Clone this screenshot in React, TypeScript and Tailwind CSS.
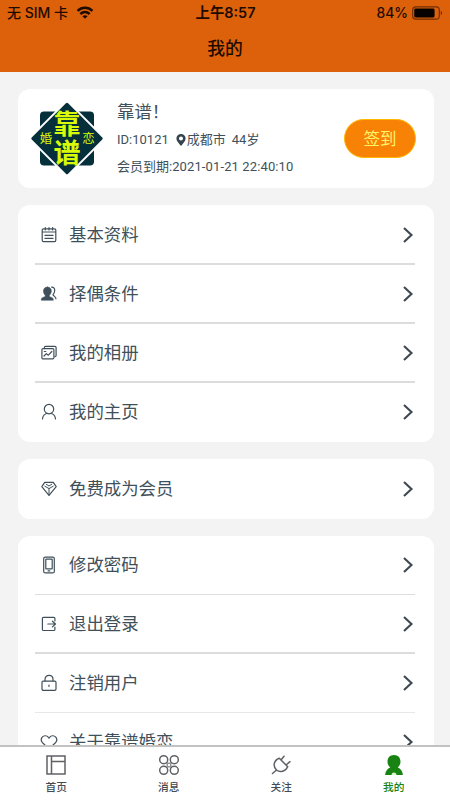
import React from "react";

type IconName =
  | "notes" | "match" | "album" | "person" | "gem" | "phone" | "exit" | "lock" | "heart";

const icons: Record<IconName, React.ReactNode> = {
  notes: (
    <>
      <rect x="1.2" y="1.8" width="13.600" height="12.800" rx="1.3" />
      <path d="M1.5 5h13M4.3 .6v2.4M8 .6v2.4M11.6 .6v2.4M4 8.400h8M4 11.400h8" />
    </>
  ),
  match: (
    <>
      <path
        fill="currentColor"
        strokeWidth=".5"
        d="M6.4 1C3.9 1 2.4 2.700 2.4 5c0 1.900.9 3.300 1.800 4.200v1.200L1 11.900c-.5.3-.7 1-.7 2.400h12c0-1.500-.2-2.100-.8-2.400l-3.100-1.500V9.200C9.400 8.300 10.400 6.900 10.400 5c0-2.300-1.500-4-4-4z"
      />
      <path d="M10.600 1.100c2.300.1 3.200 1.600 3.100 3.600-.1 1.800-.8 3-1.800 4.200l2.100 2c.6.500.8 1 .9 1.900" />
    </>
  ),
  album: (
    <>
      <path d="M3.400 3.600V2.400c0-.7.4-1.100 1.100-1.100h9.400c.7 0 1.200.4 1.200 1.100v8.100c0 .7-.4 1.100-1.200 1.100" />
      <rect x=".9" y="3.700" width="12" height="10.200" rx="1.200" />
      <path d="m3 11 2.300-2.300 2.100 1.500 3.400-3.700M3.300 6.500h1.500" />
    </>
  ),
  person: (
    <>
      <circle cx="8" cy="5.100" r="4.700" />
      <path d="M1.500 15c.2-3 1.600-4.700 4-5.500M10.500 9.500c2.400.8 3.800 2.500 4 5.500" />
    </>
  ),
  gem: (
    <>
      <path d="M3.700 1.300h8.600L15.200 5.600 8 14.300.8 5.600z" />
      <path d="M3.800 5.200 8 7.600l4.200-2.400M5.200 3.200 8 5l2.800-1.800M8 7.600V14" strokeWidth="1" />
    </>
  ),
  phone: (
    <>
      <rect x="2.700" y=".1" width="10.600" height="15.800" rx="1.500" />
      <rect x="4.800" y="2.200" width="6.400" height="9.700" rx=".4" />
      <path d="M7.200 13.900h1.500" strokeWidth="1.300" />
    </>
  ),
  exit: (
    <>
      <path d="M13.900 4.900V2.400c0-.7-.4-1.100-1.100-1.100H2.500c-.7 0-1.100.4-1.100 1.100v11c0 .7.400 1.100 1.100 1.100h10.300c.7 0 1.100-.4 1.100-1.100V11" />
      <path d="M6.800 8h7.700M11.400 5.200 14.500 8l-3.100 2.900" />
    </>
  ),
  lock: (
    <>
      <rect x="1" y="6.200" width="14" height="9.200" rx="1.300" />
      <path d="M4 6V4.400C4 2 5.700.4 8 .4s4 1.600 4 4V6M8 10.100v1.300" />
    </>
  ),
  heart: (
    <path d="M8 14.800 1.500 8.700C.1 7.200-.1 4.900 1.200 3.200c1.600-2 4.700-1.900 6.200.2l.6.8.6-.8c1.500-2.100 4.600-2.200 6.200-.2 1.300 1.700 1.100 4-.3 5.500z" />
  ),
};

function RowIcon({ name }: { name: IconName }) {
  return (
    <svg viewBox="0 0 16 16" className="h-4 w-4 shrink-0 overflow-visible" fill="none" stroke="currentColor" strokeWidth="1.200" strokeLinecap="round" strokeLinejoin="round">
      {icons[name]}
    </svg>
  );
}

function Row({ icon, label, divider = "" }: { icon: IconName; label: string; divider?: string }) {
  return (
    <div className={`flex shrink-0 items-center pl-[6px] pr-px ${divider || "h-[58px]"}`}>
      <RowIcon name={icon} />
      <span className="ml-3 flex-1 text-[17.4px] leading-6">{label}</span>
      <svg viewBox="0 0 12 18" className="h-[18px] w-3" fill="none" stroke="#3d4852" strokeWidth="2.1">
        <path d="m2 2 7.500 7L2 16" />
      </svg>
    </div>
  );
}

function Logo() {
  return (
    <svg viewBox="0 0 74 74" className="h-[74px] w-[74px] shrink-0" fontFamily="'Noto Sans CJK SC', sans-serif" textAnchor="middle">
      <rect x="10" y="9.500" width="54" height="54" rx="4" fill="#062f3c" />
      <path d="M37-2.500 76 36.500 37 75.500-2 36.500z" fill="#fff" />
      <path d="M37 2.300 71.200 36.500 37 70.700 2.800 36.500z" fill="#062f3c" stroke="#062f3c" strokeWidth="3" strokeLinejoin="round" />
      <g fill="#d9fa08">
        <text x="37" y="31.700" fontSize="27" fontWeight="700">靠</text>
        <text x="37" y="60.500" fontSize="27" fontWeight="700">谱</text>
        <text x="16" y="41.200" fontSize="12.500">婚</text>
        <text x="58.500" y="41.200" fontSize="12.500">恋</text>
      </g>
    </svg>
  );
}

function StatusBar() {
  return (
    <div className="grid h-[25px] grid-cols-3 items-center px-[7px] text-[14px] font-medium leading-5 text-[#1d0b00]">
      <div className="flex items-center">
        <span className="font-['Inter','Noto_Sans_CJK_SC',sans-serif] text-[14px]">无 SIM 卡</span>
        <svg viewBox="0 0 18 14" className="ml-[8px] h-[13px] w-[18px]" fill="none" stroke="currentColor" strokeWidth="2.700">
          <path d="M1 5.300c4.500-4.400 11.500-4.400 16 0M4 8.600c2.900-2.700 7.100-2.700 10 0" />
          <path d="M9 13.800 6.200 11c1.600-1.500 4-1.500 5.600 0z" fill="currentColor" stroke="none" />
        </svg>
      </div>
      <span className="pl-px text-center font-['Inter','Noto_Sans_CJK_SC',sans-serif] text-[14.400px] font-semibold">上午8:57</span>
      <div className="flex items-center justify-end">
        <span className="font-['Inter',sans-serif] text-[13.800px]">84%</span>
        <svg viewBox="0 0 32 14" className="ml-1 h-[14px] w-[31px]">
          <rect x=".7" y=".7" width="27.500" height="12.600" rx="3.300" fill="none" stroke="#712e04" strokeWidth="1.200" />
          <rect x="2.300" y="2.300" width="21" height="9.400" rx="1.500" fill="#080200" />
          <path d="M29.700 4.800c1.700.6 1.700 3.800 0 4.400z" fill="#712e04" />
        </svg>
      </div>
    </div>
  );
}

function Tab({ label, active = false, children }: { label: string; active?: boolean; children: React.ReactNode }) {
  return (
    <div className={`flex flex-col items-center pt-[7px] ${active ? "text-[#188312]" : "text-[#444b52]"}`}>
      <svg viewBox="0 0 22 22" className="h-[22px] w-[22px]" fill="none" stroke={active ? "currentColor" : "#5f6265"} strokeWidth="1.500">
        {children}
      </svg>
      <span className="mt-1 text-[10.700px] font-medium leading-4">{label}</span>
    </div>
  );
}

export default function App() {
  return (
    <div className="flex h-[800px] w-[450px] flex-col overflow-hidden bg-[#f3f3f3] font-['Roboto','Noto_Sans_CJK_SC',sans-serif] text-[#40505a]">
      <header className="h-[72px] shrink-0 bg-[#dd610a]">
        <StatusBar />
        <h1 className="pt-[12px] text-center text-[17.800px] font-medium leading-6 text-[#1d0b00]">我的</h1>
      </header>

      <main className="flex min-h-0 flex-1 flex-col overflow-hidden pl-[18px] pr-4 pt-[17px]">
        <section className="flex h-[99px] shrink-0 items-center rounded-[12px] bg-white pl-3 pr-[18px]">
          <Logo />
          <div className="ml-[13px] flex-1 whitespace-nowrap text-[13px]">
            <div className="text-[17.400px] leading-6">靠谱！</div>
            <div className="mt-[6px] flex items-center leading-5">
              <span>ID:10121</span>
              <svg viewBox="0 0 10 13" className="ml-[7px] mr-px h-3 w-[10px]">
                <path fill="#34454f" fillRule="evenodd" d="M5 0a5 5 0 0 1 5 5c0 3-3 5.500-5 8C3 10.500 0 8 0 5a5 5 0 0 1 5-5zm0 2.700a2.200 2.200 0 1 0 0 4.400 2.200 2.200 0 0 0 0-4.400z" />
              </svg>
              <span>成都市</span>
              <span className="ml-[6px]">44岁</span>
            </div>
            <div className="mt-[7px] pb-px text-[13px] leading-5">
              会员到期:<span className="tracking-[0.12px]">2021-01-21 22:40:10</span>
            </div>
          </div>
          <button className="h-[39px] w-[72px] rounded-full border border-[#ffb900] bg-[#f78205] pt-[3px] text-[16.500px] leading-6 text-[#fff36b]">签到</button>
        </section>

        <section className="mt-[17px] h-[237px] shrink-0 rounded-[12px] bg-white pl-[17px] pr-[19px] pt-px">
          <Row icon="notes" label="基本资料" divider="h-[59px] border-b-2 border-[#dcdcdc]" />
          <Row icon="match" label="择偶条件" divider="h-[59px] border-b-2 border-[#dcdcdc]" />
          <Row icon="album" label="我的相册" divider="h-[59px] border-b-2 border-[#dcdcdc]" />
          <Row icon="person" label="我的主页" />
        </section>

        <section className="mt-[17px] h-[60px] shrink-0 rounded-[12px] bg-white pl-[17px] pr-[19px] pt-px">
          <Row icon="gem" label="免费成为会员" />
        </section>

        <section className="mt-[17px] shrink-0 rounded-[12px] bg-white pl-[17px] pr-[19px]">
          <Row icon="phone" label="修改密码" divider="h-[59px] border-b border-[#dedede]" />
          <Row icon="exit" label="退出登录" divider="h-[59px] border-b-2 border-[#dcdcdc]" />
          <Row icon="lock" label="注销用户" divider="h-[59px] border-b border-[#e8e8e8]" />
          <Row icon="heart" label="关于靠谱婚恋" />
        </section>
      </main>

      <nav className="grid h-[55px] shrink-0 grid-cols-4 border-t-2 border-[#c2c2c2] bg-white">
        <Tab label="首页">
          <path d="M2 2h18v18H2zM6.500 2v18M6.500 7.500H20" />
        </Tab>
        <Tab label="消息">
          <circle cx="5.700" cy="5.700" r="4" />
          <circle cx="16.300" cy="5.700" r="4" />
          <circle cx="5.700" cy="16.300" r="4" />
          <circle cx="16.300" cy="16.300" r="4" />
          <path d="M8.500 8.500c1.500 1 3.500 1 5 0M8.500 13.500c1.500-1 3.500-1 5 0M8.500 8.500c1 1.500 1 3.500 0 5M13.500 8.500c-1 1.500-1 3.500 0 5" strokeWidth="1" />
        </Tab>
        <Tab label="关注">
          <path d="M9.300 4.300 17.700 12.700C15.500 17.500 10 19 6.500 16 2.700 12.500 3.500 6.500 9.300 4.300zM6.500 16l-4 3.500M11 6l3-3.800M16 11l4-3.300" strokeLinecap="round" />
        </Tab>
        <Tab label="我的" active>
          <path fill="currentColor" stroke="none" d="M11 1c4 0 6.500 2.800 6.500 6.500 0 2.500-1 4.600-2.700 5.900 2.700 1.100 4.800 3.400 5.100 7.600H2.100c.3-4.200 2.400-6.500 5.100-7.600C5.500 12.100 4.500 10 4.500 7.500 4.500 3.800 7 1 11 1z" />
          <path fill="#d6f8c4" stroke="none" d="M8.500 21c.3-3.200 4.700-3.200 5 0z" />
        </Tab>
      </nav>
    </div>
  );
}
